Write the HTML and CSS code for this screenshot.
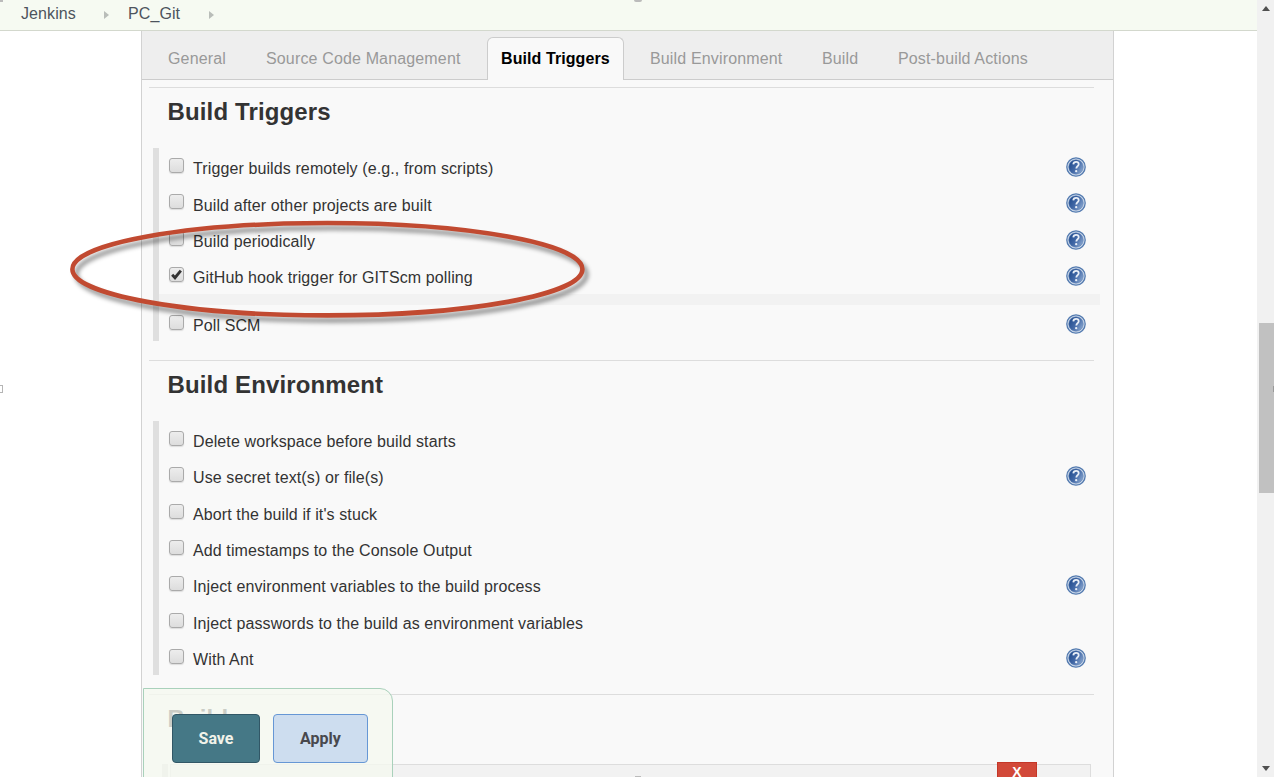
FILE: index.html
```html
<!DOCTYPE html>
<html lang="en">
<head>
<meta charset="utf-8">
<title>PC_Git Config [Jenkins]</title>
<link rel="stylesheet" href="styles.css">
</head>
<body>
<svg class="defs" width="0" height="0" aria-hidden="true">
  <defs>
    <linearGradient id="ball" x1="0" y1="0.2" x2="1" y2="0.8"><stop offset="0" stop-color="#1f4a8c"/><stop offset="0.5" stop-color="#4369a7"/><stop offset="1" stop-color="#8eabd2"/></linearGradient>
    <symbol id="help" viewBox="0 0 20 20">
      <circle cx="10" cy="10" r="9.2" fill="#d3deec" stroke="#547bb0" stroke-width="1.3"/>
      <circle cx="10" cy="10" r="7.3" fill="url(#ball)" stroke="#5b7fb4" stroke-width=".5"/>
      <path d="M7.3 7.4C7.5 5.5 8.6 4.9 10.1 4.9c1.7 0 2.6.9 2.6 2.3 0 2-2.4 2.1-2.4 4.2" fill="none" stroke="#e9eff7" stroke-width="1.8"/>
      <circle cx="10.2" cy="14.2" r="1.15" fill="#e9eff7"/>
    </symbol>
  </defs>
</svg>
<div class="window">
  <div class="page">
    <header class="crumbs"><span class="crumb">Jenkins</span><i class="arrow"></i><span class="crumb second">PC_Git</span><i class="arrow"></i></header>
    <main class="panel">
      <nav class="tabs">
        <span class="tab t1">General</span><span class="tab t2">Source Code Management</span><span class="tab active">Build Triggers</span><span class="tab t3">Build Environment</span><span class="tab t4">Build</span><span class="tab t5">Post-build Actions</span>
      </nav>
      <section class="section first">
        <h2>Build Triggers</h2>
        <div class="rows">
          <div class="row"><i class="box"></i><span class="label">Trigger builds remotely (e.g., from scripts)</span><svg class="help"><use href="#help"/></svg></div>
          <div class="row"><i class="box"></i><span class="label">Build after other projects are built</span><svg class="help"><use href="#help"/></svg></div>
          <div class="row"><i class="box"></i><span class="label">Build periodically</span><svg class="help"><use href="#help"/></svg></div>
          <div class="row"><i class="box"><svg class="check" viewBox="0 0 12 12"><path d="M2 6.2 4.6 9 10 2.4" fill="none" stroke="#333" stroke-width="2.6"/></svg></i><span class="label">GitHub hook trigger for GITScm polling</span><svg class="help"><use href="#help"/></svg></div>
          <div class="band"></div>
          <div class="row"><i class="box"></i><span class="label">Poll SCM</span><svg class="help"><use href="#help"/></svg></div>
        </div>
      </section>
      <section class="section">
        <h2>Build Environment</h2>
        <div class="rows">
          <div class="row"><i class="box"></i><span class="label">Delete workspace before build starts</span></div>
          <div class="row"><i class="box"></i><span class="label">Use secret text(s) or file(s)</span><svg class="help"><use href="#help"/></svg></div>
          <div class="row"><i class="box"></i><span class="label">Abort the build if it's stuck</span></div>
          <div class="row"><i class="box"></i><span class="label">Add timestamps to the Console Output</span></div>
          <div class="row"><i class="box"></i><span class="label">Inject environment variables to the build process</span><svg class="help"><use href="#help"/></svg></div>
          <div class="row"><i class="box"></i><span class="label">Inject passwords to the build as environment variables</span></div>
          <div class="row"><i class="box"></i><span class="label">With Ant</span><svg class="help"><use href="#help"/></svg></div>
        </div>
      </section>
      <section class="section">
        <h2>Build</h2>
        <div class="step"><div class="step-body"><span class="delete">X</span></div></div>
      </section>
    </main>
  </div>
  <aside class="scroll"><i class="up"></i><i class="thumb"></i><i class="down"></i></aside>
</div>
<div class="savebar"><span class="btn save">Save</span><span class="btn apply">Apply</span></div>
<svg class="ring" width="540" height="120" viewBox="60 210 540 120"><ellipse cx="327.4" cy="269.2" rx="255" ry="46.2" fill="none" stroke="#c14a31" stroke-width="4.6"/></svg>
<i class="handle h-tl"></i><i class="handle h-top"></i><i class="handle h-left"></i><i class="handle h-right"></i><i class="handle h-bottom"></i>
</body>
</html>
```
FILE: styles.css
```css
* { box-sizing: border-box; }
body { margin: 0; width: 1274px; height: 777px; overflow: hidden; background: #fff; font-family: "Liberation Sans", Arial, sans-serif; font-size: 16px; color: #333; position: relative; }
.defs { position: absolute; }
.window { display: flex; height: 777px; overflow: hidden; }
.page { width: 1257px; height: 777px; overflow: hidden; }
.crumbs { height: 31px; background: #f6faf2; border-bottom: 1px solid #d3d8cd; display: flex; align-items: center; padding: 0 0 2px 21px; color: #4d545d; }
.crumb { width: 55px; line-height: 20px; white-space: nowrap; letter-spacing: .1px; }
.crumb.second { margin-left: 19px; width: 53px; }
.arrow { margin: 2px 0 0 28px; border: solid transparent; border-width: 4.5px 0 4.5px 5px; border-left-color: #b9bdb9; }
.panel { margin-left: 141px; width: 973px; height: 746px; background: #f9f9f9; border: solid #d2d2d2; border-width: 0 1px; overflow: hidden; }
.tabs { height: 49px; background: #eee; border-bottom: 1px solid #ccc; display: flex; align-items: flex-end; color: #999; letter-spacing: .15px; }
.tab { height: 42px; line-height: 44px; white-space: nowrap; }
.t1 { margin-left: 26px; width: 98px; }
.t2 { width: 221px; }
.active { width: 137px; height: 43px; line-height: 42px; padding-left: 13px; margin-bottom: -1px; border: 1px solid #ccc; border-bottom: 0; border-radius: 6px 6px 0 0; background: #f9f9f9; color: #000; font-weight: bold; letter-spacing: .08px; }
.t3 { margin-left: 26px; width: 172px; }
.t4 { width: 76px; }
.section { margin: 0 19px 18.4px 7px; border-top: 1px solid #ddd; }
.first { margin-top: 7px; }
h2 { margin: 0; height: 60px; padding: 10px 0 0 18.5px; line-height: 28px; font-size: 24px; letter-spacing: .14px; color: #333; }
.rows { margin: 0 -6px 0 4px; border-left: 6px solid #dfdfdf; }
.row { height: 36.4px; display: flex; align-items: flex-start; padding: 10px 14px 0 10px; }
.box { width: 15px; height: 15px; margin: 0 9px 0 0; flex: none; border: 1px solid #aaa; border-radius: 3px; background: linear-gradient(#ededed, #ddd); box-shadow: 0 1px 1px #ddd; }
.label { line-height: 20px; padding-top: 1.2px; white-space: nowrap; letter-spacing: .11px; }
.help { width: 20px; height: 20px; margin: -1.2px 0 0 auto; flex: none; }
.check { display: block; width: 13px; height: 13px; }
.band { height: 11.4px; background: #f2f2f2; }
.step { margin: 9.5px 0 0 13px; border-left: 6px solid #dfdfdf; padding: 0 3px 0 2px; height: 40px; }
.step-body { height: 40px; border: 1px solid #ddd; background: #f2f2f2; display: flex; justify-content: flex-end; padding-right: 53px; }
.delete { width: 40px; height: 24px; margin-top: -3px; background: #d24939; border: 1px solid #c43728; color: #fff; font-weight: bold; font-size: 14px; line-height: 19px; text-align: center; }
.scroll { width: 17px; background: #f1f1f1; display: flex; flex-direction: column; align-items: flex-end; }
.up, .down { border: solid transparent; border-width: 0 4px 5px; border-bottom-color: #505050; margin: 6px 4px 0 0; }
.thumb { width: 15px; height: 170px; background: #c1c1c1; margin-top: 312px; }
.down { border-width: 5px 4px 0; border-top-color: #505050; margin-top: 273px; }
.savebar { position: absolute; left: 143px; top: 688px; width: 249.5px; height: 100px; background: rgba(245, 249, 239, .78); border: 1px solid #a9d1bb; border-radius: 0 13px 0 0; padding: 25px 0 0 28px; display: flex; gap: 13px; align-items: flex-start; }
.btn { height: 49px; line-height: 48px; text-align: center; border-radius: 4px; font-weight: bold; font-size: 16px; border: 1px solid; font-family: Roboto, "Liberation Sans", sans-serif; }
.save { width: 88px; background: #457886; border-color: #315766; color: #f2f3ea; }
.apply { width: 95px; background: #cdddef; border-color: #6697d5; color: #48484d; }
.ring { position: absolute; left: 60px; top: 210px; filter: drop-shadow(4px 5px 2px rgba(0, 0, 0, .4)); }
.handle { position: absolute; background: #bbb; }
.h-tl { left: 0; top: 0; width: 3px; height: 2px; }
.h-top { left: 634px; top: 0; width: 8px; height: 2px; border-radius: 0 0 2px 2px; }
.h-left { left: -3px; top: 385px; width: 6px; height: 8px; background: #fff; border: 1px solid #b5b5b5; }
.h-right { left: 1273px; top: 386px; width: 1px; height: 6px; background: #999; }
.h-bottom { left: 635px; top: 776px; width: 6px; height: 1px; }
```
